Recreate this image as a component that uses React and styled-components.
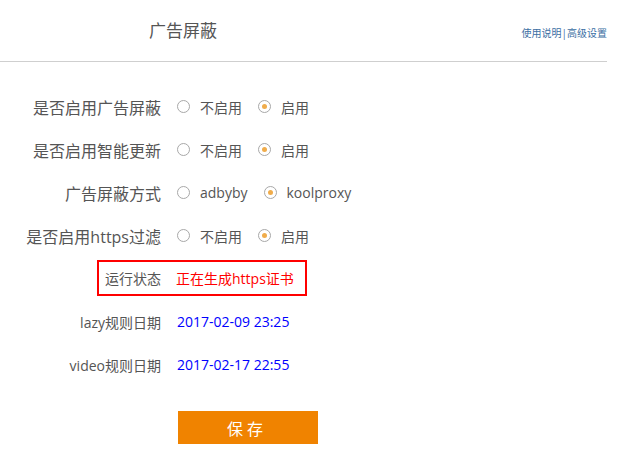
import React, { useState } from 'react';
import styled, { createGlobalStyle } from 'styled-components';

const GlobalStyle = createGlobalStyle`
  body {
    margin: 0;
    background: #fff;
    font-family: 'Open Sans', 'Noto Sans CJK SC', 'Microsoft YaHei', sans-serif;
    color: #555;
  }
`;

const Page = styled.div`
  width: 627px;
  height: 470px;
  overflow: hidden;
`;

const Header = styled.div`
  width: 607px;
  height: 61px;
  border-bottom: 1px solid #cfcfcf;
  display: flex;
  align-items: center;
  justify-content: space-between;
`;

const Title = styled.h1`
  margin: 0 0 0 149px;
  font-size: 17px;
  font-weight: 400;
  color: #555;
  line-height: 1;
`;

const Links = styled.div`
  margin-top: 4px;
  font-size: 10px;
  color: #3b6ea3;
  line-height: 1;
`;

const Form = styled.div`
  margin-top: 23px;
  display: flex;
  flex-direction: column;
`;

const Row = styled.div`
  display: grid;
  grid-template-columns: 161px 1fr;
  column-gap: 16px;
  align-items: center;
  height: 43px;
`;

const Label = styled.div`
  text-align: right;
  font-size: ${(p) => (p.$small ? '14px' : '16px')};
  color: #555;
  white-space: nowrap;
`;

const StatusBox = styled.div`
  margin: 3px 0 4px 97px;
  width: 210px;
  height: 36px;
  box-sizing: border-box;
  border: 2px solid #ff0000;
  display: grid;
  grid-template-columns: 62px 1fr;
  column-gap: 15px;
  align-items: center;
`;

const Value = styled.div`
  font-size: 14px;
  color: ${(p) => p.$color || '#555'};
  white-space: nowrap;
`;

const Options = styled.div`
  display: flex;
  align-items: center;
`;

const Option = styled.label`
  display: flex;
  align-items: center;
  margin-right: 16px;
  font-size: 14px;
  color: #555;
  cursor: pointer;
`;

const Circle = styled.span`
  width: 13px;
  height: 13px;
  box-sizing: border-box;
  border: 1px solid #a8a8a8;
  border-radius: 50%;
  margin-right: 10px;
  display: flex;
  align-items: center;
  justify-content: center;

  &::after {
    content: '';
    width: 5px;
    height: 5px;
    border-radius: 50%;
    background: ${(p) => (p.$checked ? '#f0ac4b' : 'transparent')};
  }
`;

const SaveButton = styled.button`
  margin: 25px 0 0 178px;
  width: 140px;
  height: 33px;
  border: none;
  background: #f08300;
  color: #fff;
  font-family: inherit;
  font-size: 16px;
  letter-spacing: 4px;
  padding-left: 4px;
  cursor: pointer;
`;

const RadioRow = ({ label, options, value, onChange }) => (
  <Row>
    <Label>{label}</Label>
    <Options>
      {options.map((o) => (
        <Option key={o} onClick={() => onChange(o)}>
          <Circle $checked={value === o} />
          {o}
        </Option>
      ))}
    </Options>
  </Row>
);

const App = () => {
  const [adblock, setAdblock] = useState('启用');
  const [autoUpdate, setAutoUpdate] = useState('启用');
  const [mode, setMode] = useState('koolproxy');
  const [https, setHttps] = useState('启用');

  return (
    <Page>
      <GlobalStyle />
      <Header>
        <Title>广告屏蔽</Title>
        <Links>使用说明|高级设置</Links>
      </Header>
      <Form>
        <RadioRow label='是否启用广告屏蔽' options={['不启用', '启用']} value={adblock} onChange={setAdblock} />
        <RadioRow label='是否启用智能更新' options={['不启用', '启用']} value={autoUpdate} onChange={setAutoUpdate} />
        <RadioRow label='广告屏蔽方式' options={['adbyby', 'koolproxy']} value={mode} onChange={setMode} />
        <RadioRow label='是否启用https过滤' options={['不启用', '启用']} value={https} onChange={setHttps} />
        <StatusBox>
          <Label $small>运行状态</Label>
          <Value $color='#ff0000'>正在生成https证书</Value>
        </StatusBox>
        <Row>
          <Label $small>lazy规则日期</Label>
          <Value $color='#0000ff'>2017-02-09 23:25</Value>
        </Row>
        <Row>
          <Label $small>video规则日期</Label>
          <Value $color='#0000ff'>2017-02-17 22:55</Value>
        </Row>
      </Form>
      <SaveButton>保存</SaveButton>
    </Page>
  );
};

export default App;
